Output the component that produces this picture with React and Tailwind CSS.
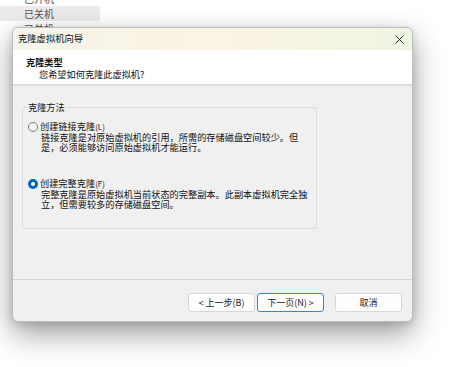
const font = { fontFamily: '"Noto Sans CJK SC", "Noto Sans", sans-serif' };

const Radio = ({ checked }) =>
  checked ? (
    <span className="mt-[0.5px] flex h-[10px] w-[10px] shrink-0 items-center justify-center rounded-full bg-[#0067c0]">
      <span className="h-[4px] w-[4px] rounded-full bg-white" />
    </span>
  ) : (
    <span className="mt-[0.5px] h-[10px] w-[10px] shrink-0 rounded-full border border-[#7a7a7a] bg-[#f7f7f7]" />
  );

const Option = ({ checked, label, hotkey, lines }) => (
  <div className="flex items-start gap-[2px]">
    <Radio checked={checked} />
    <div className="leading-[10px]">
      <div>
        {label}
        <span className="text-[8px]">({hotkey})</span>
      </div>
      {lines.map((l) => (
        <div key={l} className="ml-[1px] whitespace-nowrap">
          {l}
        </div>
      ))}
    </div>
  </div>
);

const Button = ({ children, focused }) => (
  <button
    className={
      "flex h-[19px] w-[67px] items-center justify-center rounded-[3px] bg-[#fdfdfd] text-[9px] text-[#1a1a1a] " +
      (focused ? "border border-[#3d85d0]" : "border border-[#d6d6d6]")
    }
  >
    {children}
  </button>
);

export default function App() {
  return (
    <div className="relative h-[367px] w-[460px] overflow-hidden bg-white text-[9.2px] text-[#111]" style={font}>
      {/* list behind the wizard */}
      <div className="-mt-[9px] text-[10px] text-[#555]">
        <div className="flex h-[15px] items-center pl-[24px]">已开机</div>
        <div className="flex h-[15px] w-[100px] items-center rounded-r-[3px] bg-[#ebebeb] pl-[24px]">已关机</div>
        <div className="flex h-[15px] items-center pl-[24px]">已关机</div>
      </div>

      <div className="absolute left-[12px] top-[27px] flex h-[295px] w-[401px] flex-col overflow-hidden rounded-[6px] border border-[#bdbdbd] bg-[#f0f0f0] shadow-[0_12px_30px_rgba(0,0,0,0.38),0_2px_8px_rgba(0,0,0,0.14)]">
        {/* title bar */}
        <div className="flex h-[22px] shrink-0 items-center justify-between bg-gradient-to-r from-[#f4f5ea] via-[#fcf3e3] to-[#eef6e3] pl-[5px] pr-[8px]">
          <span className="text-[9.3px]">克隆虚拟机向导</span>
          <svg width="9" height="9" viewBox="0 0 9 9">
            <path d="M0.5 0.5 L8.5 8.5 M8.5 0.5 L0.5 8.5" stroke="#2b2b2b" strokeWidth="1" />
          </svg>
        </div>

        {/* header */}
        <div className="h-[34px] shrink-0 bg-white pl-[13px] pt-[5.5px] leading-[12px]">
          <div className="font-bold">克隆类型</div>
          <div className="pl-[13px]">您希望如何克隆此虚拟机?</div>
        </div>
        <div className="h-[2px] shrink-0 bg-[#dcdcdc]" />

        {/* body */}
        <div className="h-[193px] shrink-0 pl-[9px] pt-[20.5px]">
          <div className="relative h-[122px] w-[295px] rounded-[2px] border border-[#dcdcdc] pl-[5px] pt-[13.5px]">
            <span className="absolute -top-[6px] left-[4px] bg-[#f0f0f0] px-[1px] leading-[11px]">克隆方法</span>
            <div className="flex flex-col gap-[26px]">
              <Option
                label="创建链接克隆"
                hotkey="L"
                lines={["链接克隆是对原始虚拟机的引用，所需的存储磁盘空间较少。但", "是，必须能够访问原始虚拟机才能运行。"]}
              />
              <Option
                checked
                label="创建完整克隆"
                hotkey="F"
                lines={["完整克隆是原始虚拟机当前状态的完整副本。此副本虚拟机完全独", "立，但需要较多的存储磁盘空间。"]}
              />
            </div>
          </div>
        </div>
        <div className="h-[1px] shrink-0 bg-[#d2d2d2]" />

        {/* footer */}
        <div className="flex flex-1 items-start justify-end pr-[10px] pt-[13px]">
          <div className="flex gap-[2px]">
            <Button>&lt; 上一步(B)</Button>
            <Button focused>下一页(N) &gt;</Button>
          </div>
          <div className="ml-[11px]">
            <Button>取消</Button>
          </div>
        </div>
      </div>
    </div>
  );
}
